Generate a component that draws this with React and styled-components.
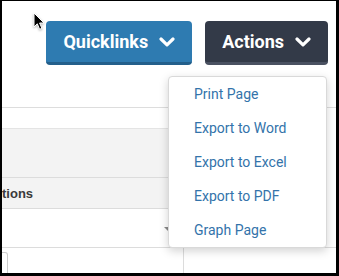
import styled, { createGlobalStyle } from "styled-components";

const GlobalStyle = createGlobalStyle`
  html, body {
    margin: 0;
    padding: 0;
    background: #ffffff;
    overflow: hidden;
  }
`;

const menuItems = [
  "Print Page",
  "Export to Word",
  "Export to Excel",
  "Export to PDF",
  "Graph Page",
];

function Chevron() {
  return (
    <svg width="16" height="10" viewBox="0 0 16 10" aria-hidden="true">
      <path
        d="M2 2 L8 7.8 L14 2"
        fill="none"
        stroke="#ffffff"
        strokeWidth="3.2"
        strokeLinecap="round"
        strokeLinejoin="round"
      />
    </svg>
  );
}

function Cursor() {
  return (
    <StyledCursor width="13" height="19" viewBox="0 0 13 19" aria-hidden="true">
      <path
        d="M1 1 L1 15 L4.3 11.8 L6.6 17.3 L8.9 16.3 L6.6 11 L11 11 Z"
        fill="#000000"
        stroke="#ffffff"
        strokeWidth="1"
        strokeLinejoin="round"
      />
    </StyledCursor>
  );
}

export default function App() {
  return (
    <>
      <GlobalStyle />
      <StyledFrame>
        <Cursor />
        <StyledHeader>
          <StyledButton $variant="primary">
            Quicklinks
            <Chevron />
          </StyledButton>
          <StyledMenuAnchor>
            <StyledButton $variant="dark">
              Actions
              <Chevron />
            </StyledButton>
            <StyledMenu>
              {menuItems.map((item) => (
                <StyledMenuItem key={item}>{item}</StyledMenuItem>
              ))}
            </StyledMenu>
          </StyledMenuAnchor>
        </StyledHeader>
        <StyledTable>
          <StyledToolbar />
          <StyledHeadRow>
            <StyledHeadText>tions</StyledHeadText>
          </StyledHeadRow>
          <StyledSelectRow>
            <StyledCaret />
          </StyledSelectRow>
        </StyledTable>
        <StyledBottomRow>
          <StyledBottomCell>
            <StyledInputStub />
          </StyledBottomCell>
        </StyledBottomRow>
      </StyledFrame>
    </>
  );
}

const StyledFrame = styled.div`
  position: relative;
  box-sizing: border-box;
  width: 339px;
  height: 276px;
  border-style: solid;
  border-color: #000000;
  border-width: 1px 3px 3px 2px;
  background: #ffffff;
  overflow: hidden;
  display: flex;
  flex-direction: column;
`;

const StyledCursor = styled.svg`
  position: absolute;
  left: 31px;
  top: 11px;
  z-index: 5;
  filter: drop-shadow(0 1px 1px rgba(0, 0, 0, 0.3));
`;

const StyledHeader = styled.header`
  flex-shrink: 0;
  box-sizing: border-box;
  height: 107px;
  padding: 20px 8px 0 0;
  display: flex;
  justify-content: flex-end;
  align-items: flex-start;
  gap: 13px;
  border-bottom: 1px solid #dddddd;
`;

const StyledButton = styled.button`
  box-sizing: border-box;
  height: 44px;
  padding: 0 17px 0 17px;
  display: flex;
  align-items: center;
  gap: 11px;
  border: none;
  border-radius: 4px;
  border-bottom: 3px solid
    ${({ $variant }) => ($variant === "dark" ? "#4a5161" : "#235f8b")};
  background: ${({ $variant }) => ($variant === "dark" ? "#333a48" : "#2e7bb1")};
  color: #ffffff;
  font-family: Roboto, "Liberation Sans", sans-serif;
  font-weight: 700;
  font-size: 18px;
  cursor: pointer;

  svg {
    margin-top: 1px;
  }
`;

const StyledMenuAnchor = styled.div`
  position: relative;
`;

const StyledMenu = styled.ul`
  position: absolute;
  top: calc(100% + 11px);
  right: 1px;
  z-index: 3;
  box-sizing: border-box;
  width: 159px;
  margin: 0;
  padding: 0;
  list-style: none;
  background: #ffffff;
  border: 1px solid #d9d9d9;
  border-radius: 4px;
  box-shadow: 0 3px 10px rgba(0, 0, 0, 0.18);
`;

const StyledMenuItem = styled.li`
  height: 34px;
  display: flex;
  align-items: center;
  padding-left: 25px;
  font-family: Roboto, "Liberation Sans", sans-serif;
  font-size: 14px;
  color: #3373aa;
`;

const StyledTable = styled.div`
  flex-shrink: 0;
  width: 300px;
  margin-top: 20px;
`;

const StyledToolbar = styled.div`
  height: 48px;
  background: #f3f3f3;
  border-top: 1px solid #e4e4e4;
  border-bottom: 1px solid #dcdcdc;
`;

const StyledHeadRow = styled.div`
  height: 30px;
  display: flex;
  align-items: center;
  background: #f3f3f3;
  border-bottom: 1px solid #dcdcdc;
`;

const StyledHeadText = styled.span`
  font-family: "Liberation Sans", Arial, sans-serif;
  font-weight: 700;
  font-size: 13px;
  color: #3a3a3a;
`;

const StyledSelectRow = styled.div`
  box-sizing: border-box;
  width: 170px;
  height: 38px;
  display: flex;
  align-items: center;
  justify-content: flex-end;
  padding: 2px 0 0 0;
`;

const StyledCaret = styled.span`
  width: 0;
  height: 0;
  border-left: 4px solid transparent;
  border-right: 4px solid transparent;
  border-top: 4px solid #8a8a8a;
`;

const StyledBottomRow = styled.div`
  flex: 1;
  display: flex;
  border-top: 1px solid #dcdcdc;
`;

const StyledBottomCell = styled.div`
  width: 181px;
  border-right: 1px solid #dcdcdc;
  padding-top: 4px;
`;

const StyledInputStub = styled.div`
  width: 5px;
  height: 40px;
  border: 1px solid #cccccc;
  border-left: none;
  border-radius: 0 3px 0 0;
`;
